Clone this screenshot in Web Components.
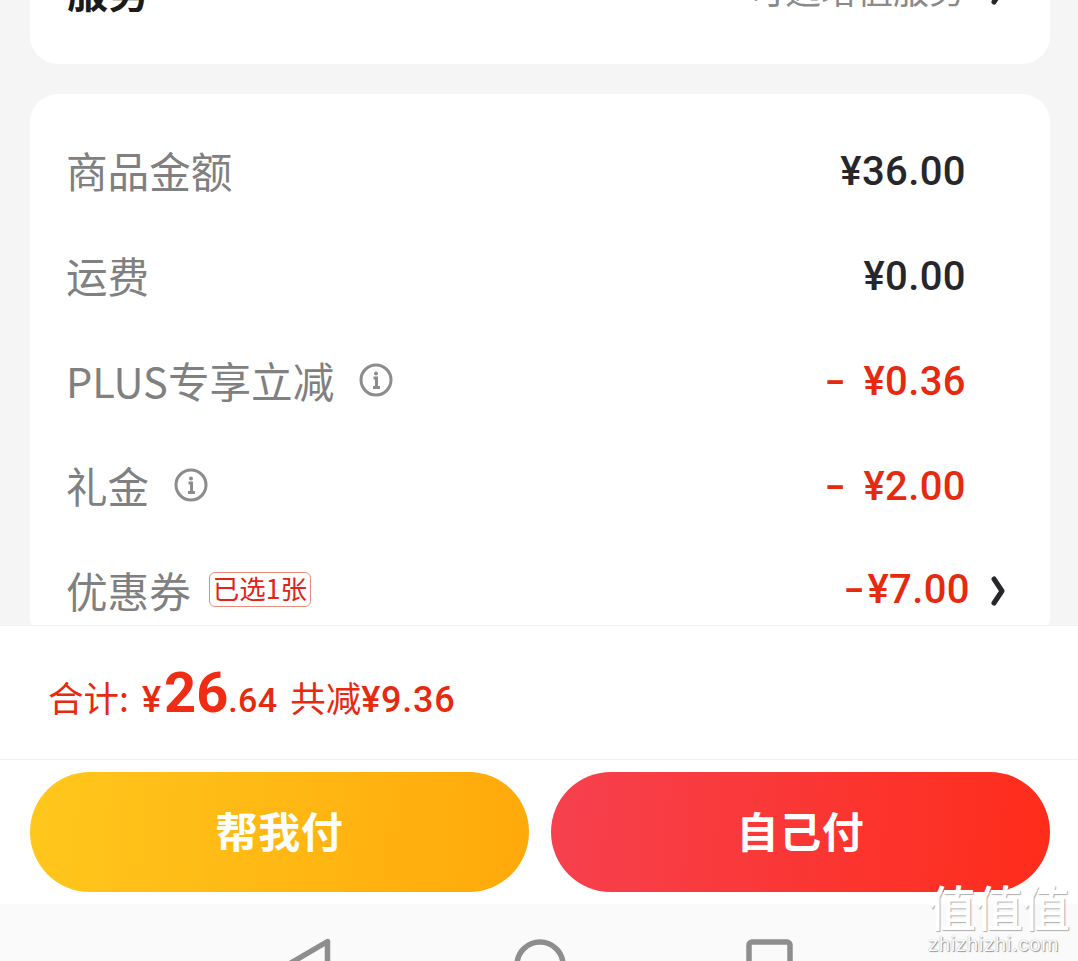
<!DOCTYPE html>
<html lang="zh"><head><meta charset="utf-8"><title>订单</title>
<style>
html,body{margin:0;padding:0;width:1078px;height:961px;overflow:hidden;background:#f5f5f5;font-family:"Noto Sans CJK SC","Noto Sans",sans-serif}
</style></head><body>
<order-page>
  <white-card slot="cards" class="first">
    <service-row></service-row>
  </white-card>
  <white-card slot="cards">
    <price-row label="商品金额" amount="¥36.00"></price-row>
    <price-row label="运费" amount="¥0.00"></price-row>
    <price-row label="PLUS专享立减" dash="17" amount="¥0.36" red info></price-row>
    <price-row label="礼金" dash="17" amount="¥2.00" red info></price-row>
    <price-row label="优惠券" dash="2" amount="¥7.00" tag="已选1张" red arrow></price-row>
  </white-card>
  <total-bar slot="total"></total-bar>
  <pay-buttons slot="pay"></pay-buttons>
  <nav-bar slot="nav"></nav-bar>
  <water-mark slot="mark"></water-mark>
</order-page>
<script>
const def=(name,html,init)=>customElements.define(name,class extends HTMLElement{
  constructor(){super();this.attachShadow({mode:'open'}).innerHTML=html}
  connectedCallback(){init&&init(this.shadowRoot,this)}
});
def('order-page',`<style>
:host{display:grid;grid-template-rows:625px 135px 144px 57px;width:1078px;height:961px;position:relative;overflow:hidden}
.scroll{overflow:hidden;padding:0 28px 0 30px;display:flex;flex-direction:column;gap:30px}
</style>
<div class="scroll"><slot name="cards"></slot></div>
<slot name="total"></slot><slot name="pay"></slot><slot name="nav"></slot><slot name="mark"></slot>`);
def('white-card',`<style>
:host{display:block;background:#fff;border-radius:28px;width:1020px;padding:25px 0 0;box-sizing:border-box;flex:none}
:host(.first){height:64px;padding:0;border-radius:0 0 28px 28px}
</style><slot></slot>`);
def('service-row',`<style>
:host{display:flex;justify-content:space-between;height:20px;overflow:hidden;padding:0 43px 0 37px;align-items:flex-end}
b{font-size:41px;line-height:48px;color:#1a1a1a;font-weight:700;margin-bottom:6px;flex:none}
span{font-size:36px;line-height:48px;color:#8a8a8a;margin-bottom:8px;display:flex;gap:24px;align-items:flex-end}
svg{width:18px;height:30px;flex:none;margin-bottom:7px}
</style><b>服务</b><span>可选增值服务<svg viewBox="0 0 18 30" fill="none"><path d="M5 3L13 15L5 27" stroke="#26262b" stroke-width="5" stroke-linecap="round" stroke-linejoin="round"/></svg></span>`);
def('price-row',`<style>
:host{display:flex;align-items:center;height:105px;padding:0 84px 0 36px;font-size:41.6px;color:#808080}
.l{line-height:60px;white-space:nowrap;margin-top:-4px}
.i{margin-left:24px;width:36px;height:36px;flex:none;margin-top:-4px}
.t{margin-left:18px;border:1px solid #ea8a7c;border-radius:6px;color:#e2231a;font-size:26.500px;line-height:29px;padding:0 3px 4px;margin-top:-4px;white-space:nowrap}
.a{margin-left:auto;font-family:Roboto,"Noto Sans CJK SC",sans-serif;font-weight:500;font-size:40px;color:#26262b;white-space:pre;letter-spacing:.4px}
:host([arrow]) .a{margin-top:-4px}
.d{display:inline-block;transform:scaleX(1.5);transform-origin:right center}
:host([red]) .a{color:#e6290f}
.ar{width:18px;height:30px;flex:none;margin:-2px -41px 0 19px}
</style><span class="l"></span><span class="a"></span>`,(s,h)=>{
  const l=s.querySelector('.l'),a=s.querySelector('.a');
  l.textContent=h.getAttribute('label');
  a.textContent=h.getAttribute('amount');
  if(h.getAttribute('dash'))a.insertAdjacentHTML('afterbegin',`<span class="d" style="margin-right:${h.getAttribute('dash')}px">-</span>`);
  if(h.hasAttribute('info'))l.insertAdjacentHTML('afterend',`<svg class="i" viewBox="0 0 36 36" fill="none" stroke="#8c8c8c"><circle cx="18" cy="18" r="15" stroke-width="3"/><circle cx="18" cy="11.5" r="2" fill="#8c8c8c" stroke="none"/><path d="M15.5 16H18.500V25M15 25.500H22" stroke-width="3"/></svg>`);
  if(h.getAttribute('tag'))l.insertAdjacentHTML('afterend',`<span class="t">${h.getAttribute('tag')}</span>`);
  if(h.hasAttribute('arrow'))a.insertAdjacentHTML('afterend',`<svg class="ar" viewBox="0 0 18 30" fill="none"><path d="M5 3L13 15L5 27" stroke="#26262b" stroke-width="5" stroke-linecap="round" stroke-linejoin="round"/></svg>`);
});
def('total-bar',`<style>
:host{display:flex;align-items:baseline;box-sizing:border-box;height:135px;background:#fff;border-top:1px solid #f2f2f2;border-bottom:1px solid #f2f2f2;padding:25px 0 0 48px;color:#e6290f;font-size:35.500px;white-space:pre;line-height:84px}
.n{font-family:Roboto,"Noto Sans CJK SC",sans-serif;font-weight:500}
.y{font-size:36px;margin:0 3px 0 13px}
.b{font-size:56px;font-weight:700;color:#f02c14}
.d{font-size:34px;letter-spacing:.3px;margin-right:13px}
.s{font-size:36px;letter-spacing:.7px}
</style>合计:<span class="n y">¥</span><span class="n b">26</span><span class="n d">.64</span>共减<span class="n s">¥9.36</span>`);
def('pay-buttons',`<style>
:host{display:flex;gap:22px;padding:12px 28px 12px 30px;background:#fff;box-sizing:border-box;height:144px}
div{width:499px;height:120px;box-sizing:border-box;padding-bottom:6px;border-radius:60px;display:flex;align-items:center;justify-content:center;color:#fff;font-size:42px;font-weight:700;letter-spacing:.7px}
.a{background:linear-gradient(95deg,#ffc71c,#ffa90b)}
.b{background:linear-gradient(95deg,#f6414f,#ff2c1a)}
</style><div class="a">帮我付</div><div class="b">自己付</div>`);
def('nav-bar',`<style>
:host{display:block;height:57px;background:#fafafa;overflow:hidden}
svg{display:block}
</style><svg width="1078" height="57" fill="none" stroke="#8e8e8e" stroke-width="5.5" stroke-linejoin="round">
<path d="M327.500 37.500L284 63L327.500 89Z"/>
<circle cx="540" cy="61" r="23"/>
<rect x="749" y="38" width="41" height="50" rx="3"/></svg>`);
def('water-mark',`<style>
:host{position:absolute;left:928px;top:876px;width:146px;height:84px;color:#fff;pointer-events:none}
.z{font-size:48px;line-height:58px;letter-spacing:-1px;font-weight:500;white-space:nowrap;color:#fff;text-shadow:1px 1px 1px rgba(120,120,120,.6)}
.c{font-family:"Liberation Sans",sans-serif;font-size:20.500px;line-height:24px;margin-top:-2px;letter-spacing:.6px;color:#fff;text-shadow:0 0 1px #888,1px 1px 1px #999;white-space:nowrap}
</style><div class="z">值值值</div><div class="c">zhizhizhi.com</div>`);
</script></body></html>
